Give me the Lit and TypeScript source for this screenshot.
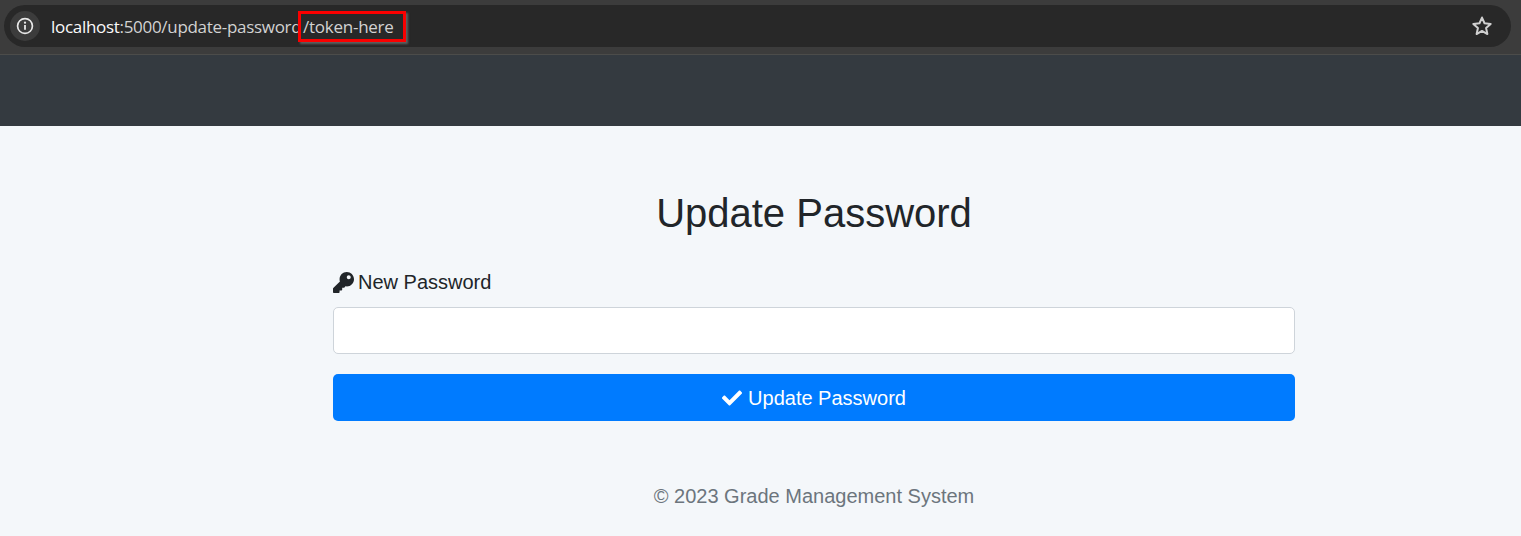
import { LitElement, html, css } from "lit";
import { customElement } from "lit/decorators.js";

@customElement("app-root")
export class AppRoot extends LitElement {
  static styles = css`
    :host { display: block; width: 1521px; height: 536px; overflow: hidden; background: #f4f7fa; font-family: "Liberation Sans", Arial, sans-serif; color: #212529; }
    .chrome { background: #3c3c3c; border-bottom: 1px solid #4c4c4a; padding: 5px 10px 0 4px; box-sizing: border-box; height: 55px; }
    .pill { height: 42px; border-radius: 21px; background: #282828; display: flex; align-items: center; padding: 0 18px 0 6px; position: relative; }
    .info { width: 30px; height: 30px; border-radius: 50%; background: #3c3c3c; display: flex; align-items: center; justify-content: center; flex: none; }
    .url { margin-left: 11px; font-family: "Open Sans", sans-serif; font-size: 17px; letter-spacing: -0.3px; color: #d2d2d2; white-space: nowrap; }
    .url b { font-weight: 400; color: #fafafa; }
    .star { margin-left: auto; display: block; }
    .mark { position: absolute; left: 294px; top: 6px; width: 108px; height: 31px; box-sizing: border-box; border: 3px solid #fb0000; box-shadow: 2px 2px 2px rgba(110,110,110,.8); background: #282828; }
    .mark span { position: absolute; left: 2px; top: 0; line-height: 25px; font-family: "Open Sans", sans-serif; font-size: 17px; letter-spacing: -0.25px; color: #d2d2d2; white-space: nowrap; }
    .nav { height: 71px; background: #343a40; }
    main { width: 962px; margin-left: 333px; display: flex; flex-direction: column; }
    h2 { margin: 62px 0 0; font-size: 40px; line-height: 50px; font-weight: 400; text-align: center; }
    label { margin-top: 29px; font-size: 20px; line-height: 30px; display: flex; align-items: center; gap: 4px; }
    input { margin-top: 10px; height: 47px; box-sizing: border-box; border: 1px solid #ced4da; border-radius: 5px; background: #fff; display: block; width: 100%; }
    button { margin-top: 20px; height: 47px; border: 0; border-radius: 5px; background: #007bff; color: #fff; font: 20px "Liberation Sans", Arial, sans-serif; display: flex; align-items: center; justify-content: center; gap: 6px; width: 100%; padding: 1px 0 0; }
    footer { margin-top: 63px; text-align: center; font-size: 20px; line-height: 25px; color: #6c757d; }
  `;

  render() {
    return html`
      <div class="chrome">
        <div class="pill">
          <div class="info">
            <svg width="18" height="18" viewBox="0 0 16 16" fill="none">
              <circle cx="8" cy="8" r="6.6" stroke="#e8e8e8" stroke-width="1.5"/>
              <path d="M8 7.2v4.2" stroke="#e8e8e8" stroke-width="1.6"/>
              <circle cx="8" cy="5" r="1" fill="#e8e8e8"/>
            </svg>
          </div>
          <div class="url"><b>localhost</b>:5000/update-password</div>
          <div class="mark"><span>/token-here</span></div>
          <svg class="star" width="22" height="22" viewBox="0 0 20 20" fill="none">
            <path d="M10 2.3l2.3 5.2 5.6.6-4.2 3.7 1.2 5.5L10 14.5l-4.9 2.8 1.2-5.5L2.1 8.1l5.6-.6z" stroke="#d0d0d0" stroke-width="1.8" stroke-linejoin="round"/>
          </svg>
        </div>
      </div>
      <div class="nav"></div>
      <main>
        <h2>Update Password</h2>
        <label>
          <svg width="21" height="21" viewBox="0 0 512 512" fill="#212529"><path d="M512 176.001C512 273.203 433.202 352 336 352c-11.22 0-22.19-1.062-32.827-3.069l-24.012 27.014A23.999 23.999 0 0 1 261.223 384H224v40c0 13.255-10.745 24-24 24h-40v40c0 13.255-10.745 24-24 24H24c-13.255 0-24-10.745-24-24v-78.059c0-6.365 2.529-12.47 7.029-16.971l161.802-161.802C163.108 213.814 160 195.271 160 176 160 78.798 238.797.001 335.999 0 433.488-.001 512 78.511 512 176.001zM336 128c0 26.51 21.49 48 48 48s48-21.49 48-48-21.49-48-48-48-48 21.49-48 48z"/></svg>
          New Password
        </label>
        <input type="password" />
        <button>
          <svg width="20" height="20" viewBox="0 0 512 512" fill="#fff"><path d="M173.898 439.404l-166.4-166.4c-9.997-9.997-9.997-26.206 0-36.204l36.203-36.204c9.997-9.998 26.207-9.998 36.204 0L192 312.69 432.095 72.596c9.997-9.997 26.207-9.997 36.204 0l36.203 36.204c9.997 9.997 9.997 26.206 0 36.204l-294.4 294.401c-9.998 9.997-26.207 9.997-36.204-.001z"/></svg>
          Update Password
        </button>
        <footer>© 2023 Grade Management System</footer>
      </main>
    `;
  }
}
